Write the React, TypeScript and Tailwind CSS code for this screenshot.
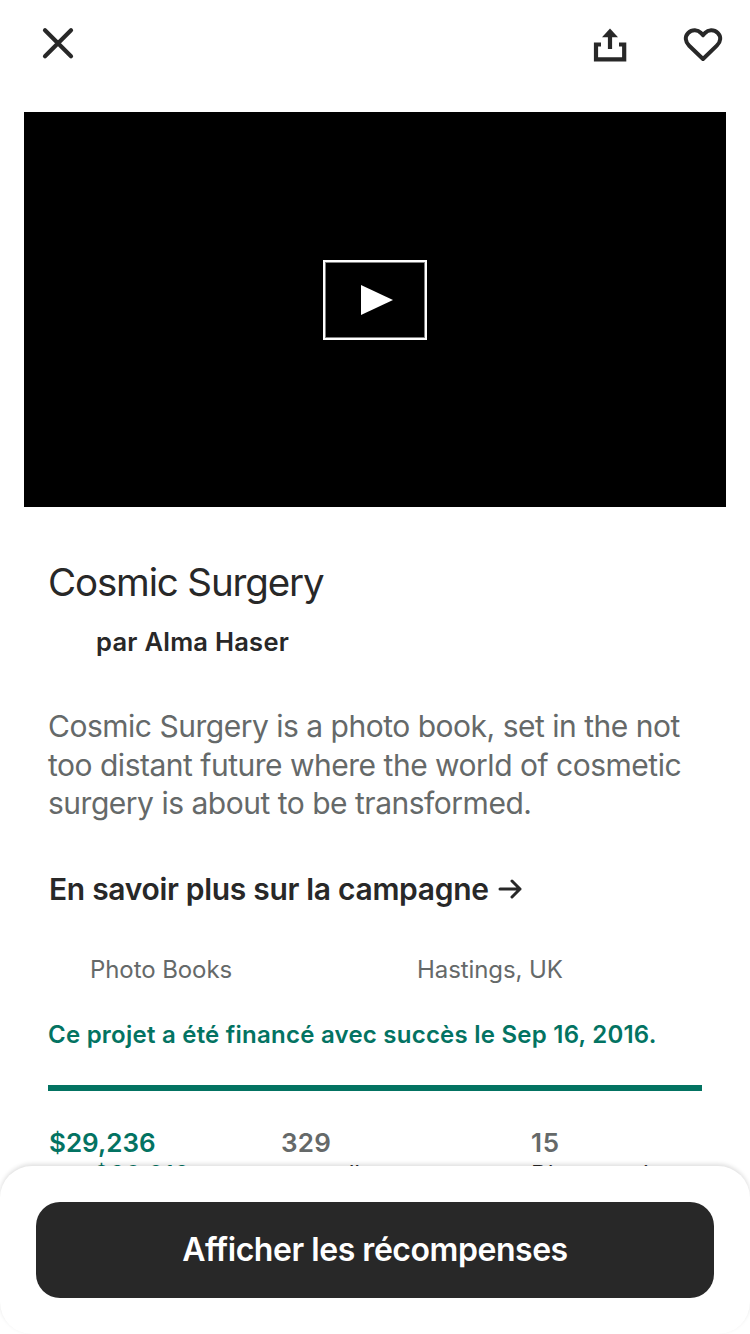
export default function App() {
  return (
    <div className="relative flex h-[1334px] w-[750px] flex-col overflow-hidden bg-white font-['Inter','Liberation_Sans',sans-serif] text-[#282828]">
      <header className="flex h-[112px] shrink-0 items-start justify-between pt-[24px] pr-[24px] pl-[38px]">
        <svg width="40" height="40" viewBox="0 0 40 40" fill="none" stroke="#282828" strokeWidth="4.2" strokeLinecap="round" aria-label="Fermer">
          <path d="M7 6.2 33 32.200M33 6.200 7 32.200" />
        </svg>
        <div className="flex gap-[52px]">
          <svg width="40" height="40" viewBox="590 24 40 40" aria-label="Partager">
            <path d="M601 44.500H596V59.300H624.200V44.500H619M610 49V36" fill="none" stroke="#282828" strokeWidth="4.2" />
            <path d="M602 37.200 610 28.500 618 37.200Z" fill="#282828" />
          </svg>
          <svg width="44" height="40" viewBox="682 24 44 40" aria-label="Enregistrer">
            <path d="M703 59 689.200 45.700C685 41.500 684.700 36.500 688.200 33C692.300 29 697.800 29.700 701 33L703 35.300 705 33C708.200 29.700 713.700 29 717.800 33C721.300 36.500 721 41.500 716.800 45.700Z" fill="none" stroke="#282828" strokeWidth="4" strokeLinejoin="round" />
          </svg>
        </div>
      </header>

      <div className="mx-[24px] flex h-[395px] shrink-0 justify-center bg-black pt-[148px]">
        <button className="flex h-[80px] w-[104px] items-center justify-center border-2 border-white shadow-[inset_0_0_0_1px_rgba(255,255,255,0.5)]" aria-label="Lire">
          <svg width="32" height="30" viewBox="0 0 32 30" className="ml-[3px]"><path d="M0 0 32 15 0 30Z" fill="white" /></svg>
        </button>
      </div>

      <main className="flex shrink-0 flex-col px-[48px] pt-[51px] whitespace-nowrap">
        <h1 className="h-[48px] text-[38.500px] leading-[48px] tracking-[-1.150px]">Cosmic Surgery</h1>
        <p className="mt-[20px] h-[32px] pl-[48px] text-[25.500px] leading-[32px] font-semibold tracking-[0.260px]">par Alma Haser</p>
        <p className="mt-[49px] text-[30px] leading-[38.500px] tracking-[-0.490px] text-[#656969]">
          Cosmic Surgery is a photo book, set in the not<br />too distant future where the world of cosmetic<br />surgery is about to be transformed.
        </p>
        <a className="mt-[46px] flex h-[40px] items-center pl-px text-[30px] leading-[40px] font-semibold tracking-[-0.310px]">
          En savoir plus sur la campagne
          <svg width="24" height="20" viewBox="0 0 24 20" className="ml-[9px]" fill="none" stroke="#282828" strokeWidth="3" strokeLinecap="round" strokeLinejoin="round"><path d="M2 10H22M14 2 22 10 14 18" /></svg>
        </a>
        <div className="mt-[46px] flex h-[30px] text-[24px] leading-[30px] tracking-[-0.080px] text-[#656969]">
          <span className="w-[327px] pl-[42px]">Photo Books</span>
          <span className="pl-[42px]">Hastings, UK</span>
        </div>
        <p className="mt-[34px] h-[32px] text-[24px] leading-[32px] font-semibold tracking-[0.240px] text-[#037362]">Ce projet a été financé avec succès le Sep 16, 2016.</p>
        <div className="mt-[34px] h-[6px] bg-[#037362]" />
        <dl className="mt-[36px] flex leading-[32px]">
          <div className="w-[233px] text-[#037362]">
            <dt className="pl-px text-[26px] font-semibold">$29,236</dt>
            <dd className="mt-px text-[24px] leading-[30px] tracking-[0.800px]">sur $20,212</dd>
          </div>
          <div className="w-[250px]">
            <dt className="text-[26px] font-semibold tracking-[0.200px] text-[#656969]">329</dt>
            <dd className="mt-px text-[24px] leading-[30px] tracking-[-0.400px]">nouvelles</dd>
          </div>
          <div>
            <dt className="text-[26px] font-semibold tracking-[0.800px] text-[#656969]">15</dt>
            <dd className="mt-px text-[24px] leading-[30px] tracking-[-0.500px]">Diagrammi</dd>
          </div>
        </dl>
      </main>

      <footer className="absolute inset-x-0 top-[1166px] h-[168px] rounded-[32px] bg-white px-[36px] pt-[36px] shadow-[0_-2px_4px_rgba(0,0,0,0.13)]">
        <button className="h-[96px] w-full rounded-[24px] bg-[#282828] text-[32px] font-semibold tracking-[-0.460px] text-white">Afficher les récompenses</button>
      </footer>
    </div>
  );
}
